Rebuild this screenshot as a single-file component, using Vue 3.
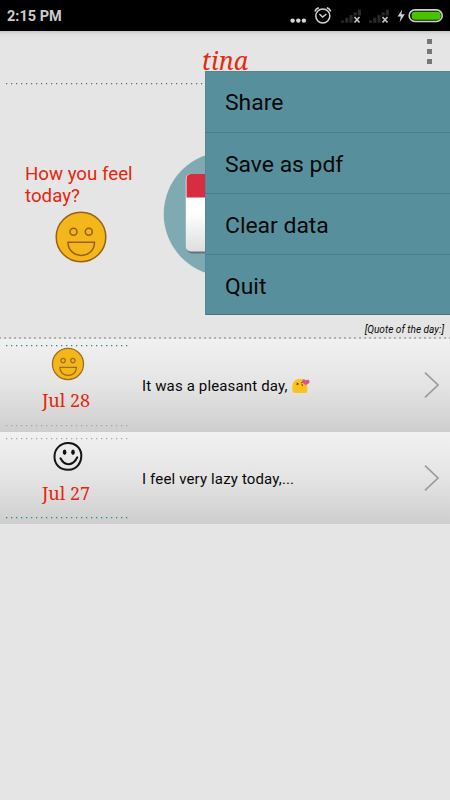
<script setup>
const menu = ['Share', 'Save as pdf', 'Clear data', 'Quit']
const entries = [
  { date: 'Jul 28', text: 'It was a pleasant day,', mood: 'happy', kiss: true },
  { date: 'Jul 27', text: 'I feel very lazy today,...', mood: 'sketch', kiss: false }
]
const bars = [0, 1, 2, 3, 4]
</script>

<template>
  <div class="screen">
    <header class="status">
      <span class="clock">2:15 PM</span>
      <svg class="status-icons" width="170" height="31" viewBox="280 0 170 31">
        <g fill="#d6d6d6">
          <circle cx="292.6" cy="20.6" r="2.2" /><circle cx="298.3" cy="20.6" r="2.2" /><circle cx="303.9" cy="20.6" r="2.2" />
        </g>
        <g fill="none" stroke="#d2d2d2" stroke-width="1.5">
          <circle cx="322.8" cy="16" r="7" />
          <path d="M319.4 14l3.2 3 3.8-3M315 11.5q.5-2.4 3.8-3.7M330.6 11.5q-.5-2.4-3.8-3.7" />
        </g>
        <g v-for="x in [341, 369]" :key="x">
          <rect v-for="b in bars" :key="b" :x="x + b * 4.2" :y="20.5 - b * 2.7" width="3.2" :height="2.2 + b * 2.7" fill="#292929" />
          <path :d="`M${x + 12.5} 15.5h8v8h-8z`" fill="#000" />
          <path :d="`M${x + 13.5} 17l5 5.5m0-5.5l-5 5.5`" stroke="#c8c8c8" stroke-width="1.6" />
        </g>
        <path d="M402.2 9.500l-4.600 7h3.200l-1.200 5.800 5.200-8h-3.400z" fill="#d0d0d0" />
        <rect x="409.2" y="9.9" width="33" height="11.6" rx="5.8" fill="#101010" stroke="#cfd2cc" stroke-width="1.6" />
        <rect x="411.7" y="11.8" width="29" height="7.9" rx="3.2" fill="#48c300" />
      </svg>
    </header>

    <section class="head">
      <div class="title-bar">
        <h1>tina</h1>
        <div class="more"><i /><i /><i /></div>
      </div>
      <svg class="rule" width="450" height="2"><path d="M6 .6H450" stroke="#666" stroke-width="1.2" stroke-dasharray="1.2 3.8" /></svg>
      <div class="today">
        <div class="feel">
          <p>How you feel<br>today?</p>
          <svg class="big-face" width="52" height="52" viewBox="0 0 52 52">
            <g fill="#f3b71b" stroke="#9a600f" stroke-width="1.5">
              <circle cx="26" cy="26" r="24.8" />
              <circle cx="18.5" cy="20.8" r="3.5" /><circle cx="33.8" cy="20.8" r="3.5" />
              <path d="M13 31.2h26.5c0 7.5-5.5 13.2-13.2 13.2S13 38.7 13 31.2z" />
            </g>
          </svg>
        </div>
        <svg class="calendar" width="126" height="126" viewBox="0 0 126 126">
          <defs>
            <linearGradient id="paper" x2="0" y2="1"><stop offset=".5" stop-color="#fff" /><stop offset="1" stop-color="#dedede" /></linearGradient>
          </defs>
          <circle cx="63" cy="63" r="62.3" fill="#80aab1" />
          <rect x="24" y="25" width="78" height="77.5" rx="5" fill="#59777b" />
          <rect x="22.8" y="23" width="80" height="77.5" rx="5" fill="url(#paper)" />
          <path d="M23.5 46.5V28q0-5 5-5h69q5 0 5 5v18.5z" fill="#d72d41" />
        </svg>
      </div>
      <p class="quote">[Quote of the day:]</p>
      <svg class="rule strong" width="450" height="2"><path d="M0 1H450" stroke="#b2b2b2" stroke-width="2" stroke-dasharray="2 3" stroke-dashoffset="1" /></svg>

      <nav class="menu">
        <a v-for="item in menu" :key="item">{{ item }}</a>
      </nav>
    </section>

    <main>
      <article v-for="(entry, i) in entries" :key="entry.date" class="entry">
        <div class="day">
          <svg width="124" height="2" :class="['dots', { soft: i === 1 }]"><path d="M0 .7H124" stroke-dasharray="1.3 3.7" /></svg>
          <svg v-if="entry.mood === 'happy'" class="face" width="34" height="34" viewBox="0 0 52 52">
            <g fill="#f3b71b" stroke="#a06a18" stroke-width="1.9">
              <circle cx="26" cy="26" r="23.8" />
              <circle cx="18.5" cy="20.8" r="3.3" /><circle cx="33.5" cy="20.8" r="3.3" />
              <path d="M13.5 31h25.5c0 7.5-5.5 12.5-12.7 12.5S13.5 38.5 13.5 31z" />
            </g>
          </svg>
          <svg v-else class="face" width="34" height="34" viewBox="0 0 34 34">
            <path d="M17 3C23.500 2.800 29.500 7 30.300 14.500 30.700 23 25.500 29.700 17.500 29.700 9 30 3.500 24.500 3.500 16.800 3.400 9 9 3.300 17 3z" fill="none" stroke="#151515" stroke-width="2" />
            <ellipse cx="13.6" cy="12.3" rx="1.8" ry="2.8" fill="#111" /><ellipse cx="22" cy="12.3" rx="1.8" ry="2.8" fill="#111" />
            <path d="M9.5 18.300c4 8 12.500 8 16.800-1" fill="none" stroke="#111" stroke-width="2" stroke-linecap="round" />
          </svg>
          <time>{{ entry.date }}</time>
          <svg width="124" height="2" :class="['dots', { soft: i === 0 }]"><path d="M0 .7H123" stroke-dasharray="1.3 3.7" /></svg>
        </div>
        <p class="note">
          {{ entry.text }}
          <svg v-if="entry.kiss" class="kiss" width="18" height="16" viewBox="0 0 18 16">
            <path d="M.500 12C-.5 4 3 1 8 1s7.300 3 7.300 8v3.500q0 2.500-2.500 2.500H3.500Q.500 15 .500 12z" fill="#fdc21b" />
            <path d="M4.500 5l2 1-2 .6M9 5l1.800-1M9.500 6.500l1.200.5-.8 1" fill="none" stroke="#5d421b" stroke-width="1" />
            <path d="M13.500 7Q9.500 4.600 10.300 2.300c.7-1.600 2.500-1.200 3.200.2 1-1.200 4.200-1 4 1.400-.2 1.700-2.500 2.500-4 3.100z" fill="#de538b" />
          </svg>
        </p>
        <svg class="chevron" width="18" height="28" viewBox="0 0 18 28"><path d="M2 1.700L15 14 2 26.300" fill="none" stroke="#9a9ba4" stroke-width="1.7" /></svg>
      </article>
    </main>
  </div>
</template>

<style scoped>
.screen { width: 450px; height: 800px; background: #e5e5e5; font-family: Roboto, sans-serif; overflow: hidden; color: #080808; }
p, h1 { margin: 0; font-weight: 400; }
svg { display: block; flex: none; }
.status { height: 31px; background: #000; display: flex; justify-content: space-between; align-items: center; }
.clock { color: #ccc; font-size: 14.5px; font-weight: 700; padding-left: 7px; padding-top: 2px; }
.head { position: relative; height: 308px; display: flex; flex-direction: column; background: linear-gradient(#c6c6c6, #dedede 3px, #e5e5e5 9px); }
.title-bar { height: 52px; display: grid; grid-template-columns: 1fr auto 1fr; padding: 0 18px; }
h1 { grid-column: 2; font: italic 25px/33px "Noto Serif", "Droid Serif", serif; color: #e52b0d; padding-top: 13px; }
.more { justify-self: end; padding-top: 8px; display: flex; flex-direction: column; gap: 5px; }
.more i { width: 5px; height: 5px; background: #77777b; }
.today { flex: 1; display: flex; }
.feel { width: 138px; padding: 78px 0 0 25px; }
.feel p { font-size: 18.7px; line-height: 22px; color: #e5250e; white-space: nowrap; }
.big-face { margin: 4px 0 0 30px; }
.calendar { margin: 66px 0 0 0; }
.quote { text-align: right; font-size: 10.1px; line-height: 14px; font-style: italic; padding: 1px 6px 0 0; }
.menu { position: absolute; left: 205px; top: 40px; width: 245px; height: 244px; background: #588f9d; box-shadow: inset 1px 1px #4f8997, inset 0 -1px #3d7987; }
.menu a { display: flex; align-items: center; height: 61px; padding: 2px 0 0 20px; box-sizing: border-box; font-size: 22.9px; border-bottom: 1px solid #4d7f8b; }
.menu a:first-child { height: 62px; }
.menu a:last-child { height: 60px; border: 0; }
.entry { height: 92.5px; display: flex; background: linear-gradient(#f1f1f1, #e4e4e4 50%, #cecece); }
.day { width: 136px; padding: 6px 6px 5px; box-sizing: border-box; display: flex; flex-direction: column; align-items: center; }
.dots { stroke: #268591; stroke-width: 1.3; }
.soft { stroke: #8eacb6; }
time { font: 18px/28px "Noto Serif", "Droid Serif", serif; color: #e6250d; margin: 5px 0 auto -4px; }
.note { display: flex; align-items: center; flex: 1; gap: 3px; padding: 2px 0 0 6px; font-size: 15px; letter-spacing: .15px; }
.kiss { margin-left: 1px; }
.chevron { margin: 32px 9px 0 0; }
</style>
